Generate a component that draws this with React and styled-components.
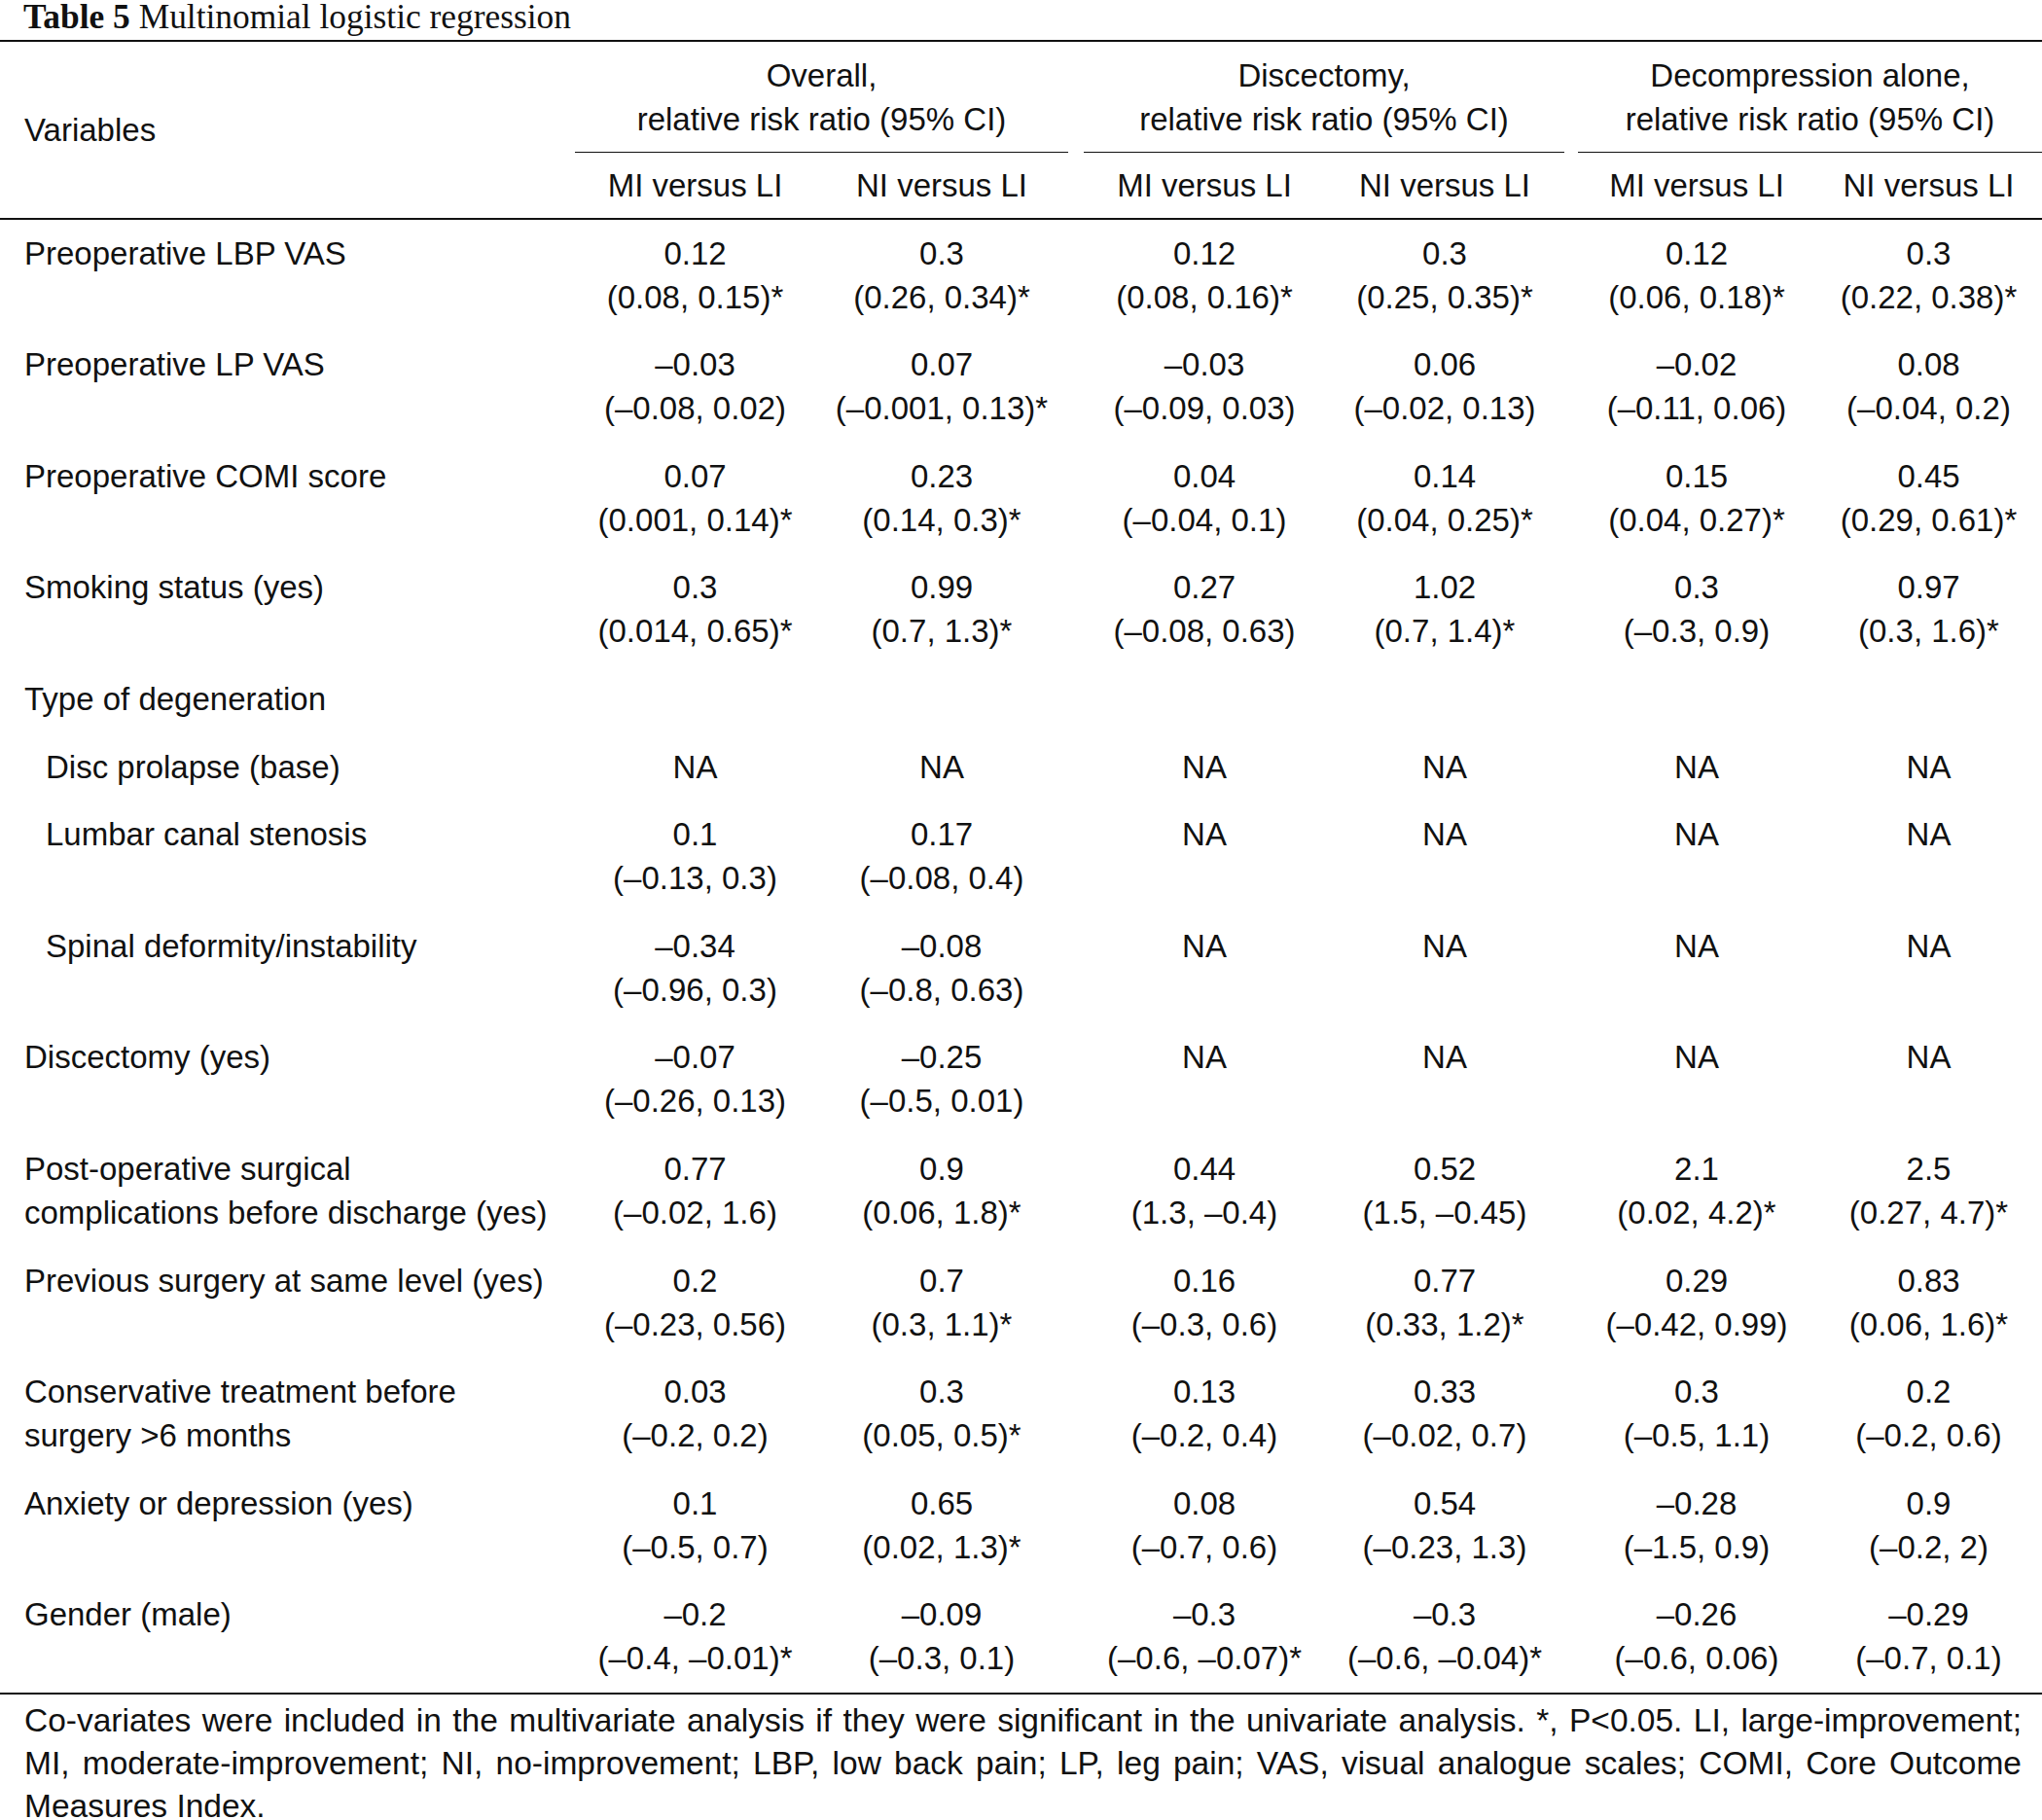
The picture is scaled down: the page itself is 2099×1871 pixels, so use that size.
import React from 'react';
import styled, { createGlobalStyle } from 'styled-components';

// -------------- CSS Style -------------- //
const GlobalStyle = createGlobalStyle`
    html, body {
        margin: 0;
        padding: 0;
        background: #fff;
    }
    body {
        font-family: "Liberation Sans", Arial, Helvetica, sans-serif;
        color: #111;
    }
`;

// label | Overall MI | Overall NI | gap | Disc MI | Disc NI | gap | Decomp MI | Decomp NI
const COLS = '591px 247px 260px 16px 248px 246px 14px 244px 233px';
const VALUE_COLS = [2, 3, 5, 6, 8, 9];

const Page = styled.div`
    width: 2099px;
`;

const Caption = styled.div`
    font-family: "Liberation Serif", "Times New Roman", serif;
    font-size: 35.4px;
    line-height: 26px;
    padding: 4px 0 0 24px;
    margin-bottom: 11px;
    b { font-weight: 700; }
`;

const Table = styled.div`
    border-top: 2px solid #111;
    border-bottom: 2px solid #111;
`;

const Head = styled.div`
    display: grid;
    grid-template-columns: ${COLS};
    border-bottom: 2px solid #111;
    font-size: 33px;
    line-height: 45px;
`;

const VarHead = styled.div`
    grid-column: 1;
    grid-row: 1 / span 2;
    align-self: center;
    padding-left: 25px;
`;

const GroupHead = styled.div`
    grid-column: ${p => p.$col} / span 2;
    grid-row: 1;
    text-align: center;
    padding: 12px 0 10.6px;
    border-bottom: 1.5px solid #111;
`;

const SubHead = styled.div`
    grid-column: ${p => p.$col};
    grid-row: 2;
    text-align: center;
    padding: 11.5px 0 10.5px;
`;

const Row = styled.div`
    display: grid;
    grid-template-columns: ${COLS};
    font-size: 33px;
    line-height: 45px;
    padding: 12px 0 12.6px;
`;

const Label = styled.div`
    grid-column: 1;
    padding-left: ${p => (p.$indent ? 47 : 25)}px;
    white-space: nowrap;
`;

const Value = styled.div`
    grid-column: ${p => p.$col};
    grid-row: 1;
    text-align: center;
    white-space: nowrap;
`;

const Line = styled.span`
    display: block;
`;

const Note = styled.p`
    margin: 0;
    padding: 5px 21px 0 25px;
    font-size: 33.5px;
    line-height: 44px;
    text-align: justify;
`;

// -------------- Data -------------- //
const GROUPS = ['Overall,', 'Discectomy,', 'Decompression alone,'];
const NA = ['NA'];

const ROWS = [
    { label: ['Preoperative LBP VAS'], values: [
        ['0.12', '(0.08, 0.15)*'], ['0.3', '(0.26, 0.34)*'], ['0.12', '(0.08, 0.16)*'],
        ['0.3', '(0.25, 0.35)*'], ['0.12', '(0.06, 0.18)*'], ['0.3', '(0.22, 0.38)*']] },
    { label: ['Preoperative LP VAS'], values: [
        ['–0.03', '(–0.08, 0.02)'], ['0.07', '(–0.001, 0.13)*'], ['–0.03', '(–0.09, 0.03)'],
        ['0.06', '(–0.02, 0.13)'], ['–0.02', '(–0.11, 0.06)'], ['0.08', '(–0.04, 0.2)']] },
    { label: ['Preoperative COMI score'], values: [
        ['0.07', '(0.001, 0.14)*'], ['0.23', '(0.14, 0.3)*'], ['0.04', '(–0.04, 0.1)'],
        ['0.14', '(0.04, 0.25)*'], ['0.15', '(0.04, 0.27)*'], ['0.45', '(0.29, 0.61)*']] },
    { label: ['Smoking status (yes)'], values: [
        ['0.3', '(0.014, 0.65)*'], ['0.99', '(0.7, 1.3)*'], ['0.27', '(–0.08, 0.63)'],
        ['1.02', '(0.7, 1.4)*'], ['0.3', '(–0.3, 0.9)'], ['0.97', '(0.3, 1.6)*']] },
    { label: ['Type of degeneration'], values: [] },
    { label: ['Disc prolapse (base)'], indent: true, values: [NA, NA, NA, NA, NA, NA] },
    { label: ['Lumbar canal stenosis'], indent: true, values: [
        ['0.1', '(–0.13, 0.3)'], ['0.17', '(–0.08, 0.4)'], NA, NA, NA, NA] },
    { label: ['Spinal deformity/instability'], indent: true, values: [
        ['–0.34', '(–0.96, 0.3)'], ['–0.08', '(–0.8, 0.63)'], NA, NA, NA, NA] },
    { label: ['Discectomy (yes)'], values: [
        ['–0.07', '(–0.26, 0.13)'], ['–0.25', '(–0.5, 0.01)'], NA, NA, NA, NA] },
    { label: ['Post-operative surgical', 'complications before discharge (yes)'], values: [
        ['0.77', '(–0.02, 1.6)'], ['0.9', '(0.06, 1.8)*'], ['0.44', '(1.3, –0.4)'],
        ['0.52', '(1.5, –0.45)'], ['2.1', '(0.02, 4.2)*'], ['2.5', '(0.27, 4.7)*']] },
    { label: ['Previous surgery at same level (yes)'], values: [
        ['0.2', '(–0.23, 0.56)'], ['0.7', '(0.3, 1.1)*'], ['0.16', '(–0.3, 0.6)'],
        ['0.77', '(0.33, 1.2)*'], ['0.29', '(–0.42, 0.99)'], ['0.83', '(0.06, 1.6)*']] },
    { label: ['Conservative treatment before', 'surgery >6 months'], values: [
        ['0.03', '(–0.2, 0.2)'], ['0.3', '(0.05, 0.5)*'], ['0.13', '(–0.2, 0.4)'],
        ['0.33', '(–0.02, 0.7)'], ['0.3', '(–0.5, 1.1)'], ['0.2', '(–0.2, 0.6)']] },
    { label: ['Anxiety or depression (yes)'], values: [
        ['0.1', '(–0.5, 0.7)'], ['0.65', '(0.02, 1.3)*'], ['0.08', '(–0.7, 0.6)'],
        ['0.54', '(–0.23, 1.3)'], ['–0.28', '(–1.5, 0.9)'], ['0.9', '(–0.2, 2)']] },
    { label: ['Gender (male)'], values: [
        ['–0.2', '(–0.4, –0.01)*'], ['–0.09', '(–0.3, 0.1)'], ['–0.3', '(–0.6, –0.07)*'],
        ['–0.3', '(–0.6, –0.04)*'], ['–0.26', '(–0.6, 0.06)'], ['–0.29', '(–0.7, 0.1)']] },
];

const Lines = ({ lines }) => lines.map((l, i) => <Line key={i}>{l}</Line>);

const App = () => {
    return (
        <Page>
            <GlobalStyle />
            <Caption><b>Table 5</b> Multinomial logistic regression</Caption>
            <Table>
                <Head>
                    <VarHead>Variables</VarHead>
                    {GROUPS.map((g, i) => (
                        <GroupHead key={g} $col={VALUE_COLS[i * 2]}>
                            <Line>{g}</Line>
                            <Line>relative risk ratio (95% CI)</Line>
                        </GroupHead>
                    ))}
                    {VALUE_COLS.map((c, i) => (
                        <SubHead key={c} $col={c}>{i % 2 === 0 ? 'MI versus LI' : 'NI versus LI'}</SubHead>
                    ))}
                </Head>
                {ROWS.map(row => (
                    <Row key={row.label[0]}>
                        <Label $indent={row.indent}><Lines lines={row.label} /></Label>
                        {row.values.map((v, i) => (
                            <Value key={i} $col={VALUE_COLS[i]}><Lines lines={v} /></Value>
                        ))}
                    </Row>
                ))}
            </Table>
            <Note>
                Co-variates were included in the multivariate analysis if they were significant in the univariate analysis. *, P&lt;0.05. LI, large-improvement; MI, moderate-improvement; NI, no-improvement; LBP, low back pain; LP, leg pain; VAS, visual analogue scales; COMI, Core Outcome Measures Index.
            </Note>
        </Page>
    );
};

export default App;
